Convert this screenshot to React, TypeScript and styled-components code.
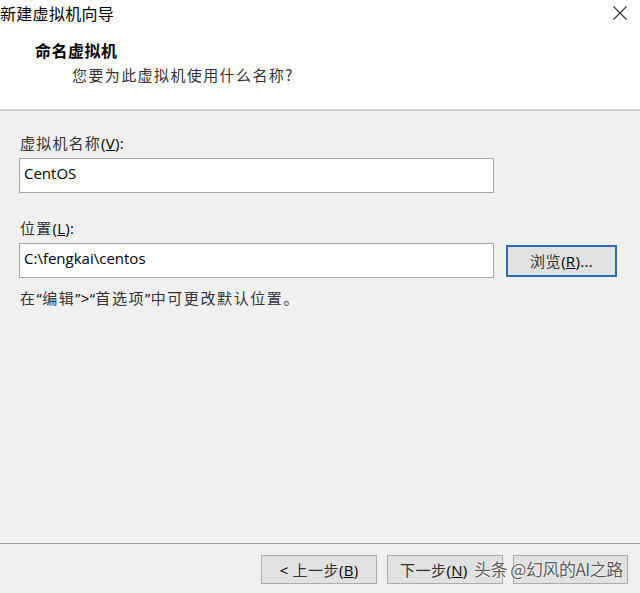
import React from 'react';
import styled, { createGlobalStyle } from 'styled-components';

const GlobalStyle = createGlobalStyle`
  html, body {
    margin: 0;
    padding: 0;
    background: #ffffff;
  }
  * {
    box-sizing: border-box;
  }
`;

const cjk = `"Noto Sans CJK SC", "Noto Sans", sans-serif`;
const latin = `"Open Sans", "Noto Sans CJK SC", sans-serif`;

const Window = styled.div`
  width: 640px;
  height: 593px;
  display: flex;
  flex-direction: column;
  font-family: ${cjk};
  overflow: hidden;
`;

const TitleBar = styled.div`
  height: 26px;
  display: flex;
  align-items: center;
  justify-content: space-between;
  background: #ffffff;
`;

const TitleText = styled.span`
  font-size: 16px;
  line-height: 26px;
  color: #000;
  letter-spacing: 0.3px;
`;

const CloseButton = styled.div`
  width: 46px;
  height: 26px;
  display: flex;
  align-items: center;
  justify-content: center;
  margin-right: -3px;
`;

const Header = styled.div`
  height: 83px;
  background: #ffffff;
  padding: 13px 0 0 35px;
`;

const HeaderTitle = styled.div`
  font-size: 16px;
  font-weight: 700;
  line-height: 22px;
  color: #000;
  letter-spacing: 0.5px;
`;

const HeaderSub = styled.div`
  margin: 3px 0 0 37px;
  font-size: 15px;
  line-height: 22px;
  color: #333;
  letter-spacing: 1.4px;
`;

const Divider = styled.div`
  height: 2px;
  background: #d0d0d0;
`;

const Body = styled.div`
  flex: 1;
  background: #f0f0f0;
  padding: 22px 0 0 19px;
  display: flex;
  flex-direction: column;
`;

const Label = styled.div<{ $top?: number }>`
  margin-top: ${p => p.$top ?? 0}px;
  font-size: 15px;
  line-height: 20px;
  color: #333;
  padding-left: 1px;
  letter-spacing: 1.2px;
`;

const Row = styled.div`
  margin-top: 5px;
  display: flex;
  align-items: center;
  gap: 12px;
`;

const TextBox = styled.div`
  width: 475px;
  height: 35px;
  background: #fff;
  border: 1px solid #a6a6a6;
  padding: 0 0 6px 4px;
  display: flex;
  align-items: center;
  font-family: ${latin};
  font-size: 15px;
  color: #000;
`;

const Button = styled.div<{ $w: number; $focused?: boolean }>`
  width: ${p => p.$w}px;
  height: ${p => (p.$focused ? 32 : 29)}px;
  background: #e1e1e1;
  border: ${p => (p.$focused ? '2px solid #2a6db3' : '1px solid #adadad')};
  display: flex;
  align-items: center;
  justify-content: center;
  font-size: 15px;
  color: #333;
  letter-spacing: 0.5px;
`;

const NextButton = styled(Button)`
  justify-content: flex-start;
  padding-left: 12px;
`;

const Latin = styled.span`
  font-family: ${latin};
  color: #000;
  letter-spacing: 0.3px;
`;

const Hint = styled.div`
  margin-top: 10px;
  font-size: 15px;
  line-height: 20px;
  color: #333;
  padding-left: 1px;
  letter-spacing: 1.6px;
`;

const Footer = styled.div`
  height: 50px;
  background: #f0f0f0;
  border-top: 1px solid #a0a0a0;
  display: flex;
  justify-content: flex-end;
  align-items: flex-start;
  padding: 11px 12px 0 0;
  gap: 10px;
  position: relative;
`;

const Watermark = styled.span`
  position: absolute;
  left: 474px;
  top: 14px;
  font-size: 17px;
  line-height: 22px;
  color: #5c5c5c;
  letter-spacing: -0.5px;
  text-shadow: 0 0 2px #fff, 0 0 2px #fff;
  white-space: nowrap;
`;

const Close = () => (
  <svg width="16" height="16" viewBox="0 0 16 16">
    <path d="M1.5 1.5 L14.5 14.5 M14.5 1.5 L1.5 14.5" stroke="#333" strokeWidth="1.1" fill="none" />
  </svg>
);

const App: React.FC = () => {
  return (
    <Window>
      <GlobalStyle />
      <TitleBar>
        <TitleText>新建虚拟机向导</TitleText>
        <CloseButton>
          <Close />
        </CloseButton>
      </TitleBar>
      <Header>
        <HeaderTitle>命名虚拟机</HeaderTitle>
        <HeaderSub>您要为此虚拟机使用什么名称?</HeaderSub>
      </Header>
      <Divider />
      <Body>
        <Label>
          虚拟机名称<Latin>(<u>V</u>):</Latin>
        </Label>
        <Row>
          <TextBox>CentOS</TextBox>
        </Row>
        <Label $top={25}>
          位置<Latin>(<u>L</u>):</Latin>
        </Label>
        <Row>
          <TextBox>C:\fengkai\centos</TextBox>
          <Button $w={111} $focused>
            浏览<Latin>(<u>R</u>)...</Latin>
          </Button>
        </Row>
        <Hint>
          在<Latin>“</Latin>编辑<Latin>”&gt;“</Latin>首选项<Latin>”</Latin>中可更改默认位置。
        </Hint>
      </Body>
      <Footer>
        <Button $w={116}>
          <Latin>&lt;</Latin>&nbsp;上一步<Latin>(<u>B</u>)</Latin>
        </Button>
        <NextButton $w={116}>
          下一步<Latin>(<u>N</u>)</Latin>
        </NextButton>
        <Button $w={115} />
        <Watermark>头条 @幻风的AI之路</Watermark>
      </Footer>
    </Window>
  );
};

export default App;
